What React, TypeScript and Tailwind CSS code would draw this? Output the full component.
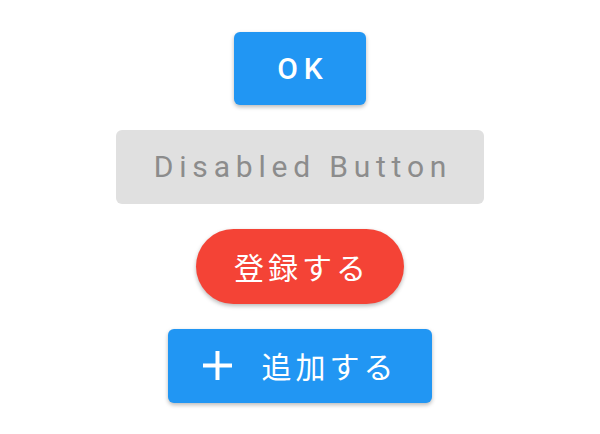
import type React from "react";

const shadow = "shadow-[0_2px_4px_rgba(0,0,0,0.28)]";

const PlusIcon: React.FC = () => (
  <svg width="29" height="29" viewBox="0 0 29 29" aria-hidden="true">
    <rect x="12.5" y="0" width="4" height="29" fill="white" />
    <rect x="0" y="12.5" width="29" height="4" fill="white" />
  </svg>
);

export default function App() {
  return (
    <div className="w-[600px] h-[434px] bg-white flex flex-col items-center justify-center gap-[25px] font-['Roboto','Noto_Sans_CJK_JP',sans-serif]">
      <button
        className={`w-[132px] h-[73px] rounded-[6px] bg-[#2196f3] text-white text-[30px] font-medium tracking-[6px] pl-[6px] flex items-center justify-center ${shadow}`}
      >
        OK
      </button>

      <button
        disabled
        className="w-[368px] h-[74px] rounded-[6px] bg-[#e0e0e0] text-[#8c8c8c] text-[30px] tracking-[5.8px] pl-[6px] flex items-center justify-center"
      >
        Disabled Button
      </button>

      <button
        className={`w-[208px] h-[75px] rounded-full bg-[#f44336] text-white text-[30px] tracking-[4px] pl-[4px] flex items-center justify-center font-['Noto_Sans_CJK_JP',sans-serif] ${shadow}`}
      >
        登録する
      </button>

      <button
        className={`w-[264px] h-[74px] rounded-[6px] bg-[#2196f3] text-white text-[30px] tracking-[4px] flex items-center justify-center gap-[30px] font-['Noto_Sans_CJK_JP',sans-serif] ${shadow}`}
      >
        <PlusIcon />
        <span>追加する</span>
      </button>
    </div>
  );
}
